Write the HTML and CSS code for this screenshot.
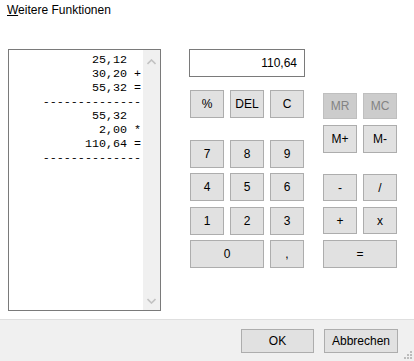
FILE: index.html
```html
<!DOCTYPE html>
<html>
<head>
<meta charset="utf-8">
<link rel="stylesheet" href="styles.css">
</head>
<body>
<div class="dialog">
  <div class="title"><span class="acc">W</span>eitere Funktionen</div>
  <div class="content">
    <div class="tape">
      <pre class="tape-text">25,12  
30,20 +
55,32 =
--------------
55,32  
2,00 *
110,64 =
--------------</pre>
      <div class="scrollbar">
        <svg class="arrow" width="9" height="6" viewBox="0 0 9 6"><path d="M0.5 5 L4.5 1 L8.5 5" fill="none" stroke="#c2c2c2" stroke-width="1.6"/></svg>
        <svg class="arrow" width="9" height="6" viewBox="0 0 9 6"><path d="M0.5 1 L4.5 5 L8.5 1" fill="none" stroke="#c2c2c2" stroke-width="1.6"/></svg>
      </div>
    </div>
    <div class="panel">
      <div class="col-left">
        <div class="display">110,64</div>
        <div class="keys top-keys">
          <button class="key">%</button>
          <button class="key">DEL</button>
          <button class="key">C</button>
        </div>
        <div class="keys num-keys">
          <button class="key">7</button>
          <button class="key">8</button>
          <button class="key">9</button>
          <button class="key">4</button>
          <button class="key">5</button>
          <button class="key">6</button>
          <button class="key">1</button>
          <button class="key">2</button>
          <button class="key">3</button>
          <button class="key wide">0</button>
          <button class="key">,</button>
        </div>
      </div>
      <div class="col-right">
        <div class="keys mem-keys">
          <button class="key disabled">MR</button>
          <button class="key disabled">MC</button>
        </div>
        <div class="keys mem2-keys">
          <button class="key">M+</button>
          <button class="key">M-</button>
        </div>
        <div class="keys op-keys">
          <button class="key">-</button>
          <button class="key">/</button>
          <button class="key">+</button>
          <button class="key">x</button>
          <button class="key wide">=</button>
        </div>
      </div>
    </div>
  </div>
  <div class="footer">
    <button class="dlg-btn ok">OK</button>
    <button class="dlg-btn cancel">Abbrechen</button>
    <svg class="grip" width="9" height="9" viewBox="0 0 9 9">
      <rect x="7" y="1" width="2" height="2" fill="#bcbcbc"/>
      <rect x="4" y="4" width="2" height="2" fill="#bcbcbc"/>
      <rect x="7" y="4" width="2" height="2" fill="#bcbcbc"/>
      <rect x="1" y="7" width="2" height="2" fill="#bcbcbc"/>
      <rect x="4" y="7" width="2" height="2" fill="#bcbcbc"/>
      <rect x="7" y="7" width="2" height="2" fill="#bcbcbc"/>
    </svg>
  </div>
</div>
</body>
</html>
```
FILE: styles.css
```css
html, body {
  margin: 0;
  padding: 0;
  background: #ffffff;
}
.dialog {
  width: 414px;
  height: 361px;
  display: flex;
  flex-direction: column;
  font-family: "Liberation Sans", Arial, sans-serif;
  font-size: 12px;
  color: #000;
  position: relative;
  overflow: hidden;
}
.title {
  height: 49px;
  box-sizing: border-box;
  padding: 2px 0 0 7px;
  line-height: 16px;
}
.acc {
  text-decoration: underline;
}
.content {
  height: 270px;
  display: flex;
  flex-direction: row;
  align-items: flex-start;
}
.tape {
  margin-left: 8px;
  width: 153px;
  height: 262px;
  box-sizing: border-box;
  border: 1px solid #7a7a7a;
  display: flex;
  flex-direction: row;
  background: #fff;
}
.tape-text {
  flex: 1;
  margin: 0;
  padding: 3px 2px 0 0;
  font-family: "Liberation Mono", "Courier New", monospace;
  font-size: 11.7px;
  line-height: 14px;
  text-align: right;
  white-space: pre;
}
.scrollbar {
  width: 17px;
  background: #f0f0f0;
  display: flex;
  flex-direction: column;
  justify-content: space-between;
  align-items: center;
  padding: 9px 0 6px;
  box-sizing: border-box;
}
.arrow {
  display: block;
}
.panel {
  margin-left: 28px;
  display: flex;
  flex-direction: row;
  gap: 18px;
}
.col-left {
  width: 116px;
  display: flex;
  flex-direction: column;
}
.display {
  height: 28px;
  box-sizing: border-box;
  border: 1px solid #7a7a7a;
  text-align: right;
  padding-right: 7px;
  line-height: 26px;
  font-size: 12px;
}
.keys {
  display: grid;
  grid-template-columns: 34px 34px 34px;
  column-gap: 6px;
}
.top-keys {
  margin: 13px 0 0 1px;
  grid-template-rows: 28px;
}
.num-keys {
  margin: 22px 0 0 1px;
  grid-template-rows: 28px 28px 28px 28px;
  row-gap: 5.34px;
}
.col-right {
  display: flex;
  flex-direction: column;
  padding-top: 44px;
}
.col-right .keys {
  grid-template-columns: 34px 34px;
}
.mem-keys {
  grid-template-rows: 26px;
}
.mem2-keys {
  margin-top: 6px;
  grid-template-rows: 28px;
}
.op-keys {
  margin-top: 21px;
  grid-template-rows: 27px 27px 28px;
  row-gap: 6px;
}
.key {
  margin: 0;
  padding: 0;
  box-sizing: border-box;
  border: 1px solid #adadad;
  background: #e1e1e1;
  font-family: "Liberation Sans", Arial, sans-serif;
  font-size: 12px;
  color: #000;
  line-height: 1;
}
.key.wide {
  grid-column: span 2;
}
.key.disabled {
  background: #cccccc;
  border-color: #bfbfbf;
  color: #838383;
}
.footer {
  flex: 1;
  box-sizing: border-box;
  border-top: 1px solid #dfdfdf;
  background: #f0f0f0;
  display: flex;
  flex-direction: row;
  justify-content: flex-end;
  align-items: flex-start;
  gap: 10px;
  padding: 9px 16px 0 0;
  position: relative;
}
.dlg-btn {
  margin: 0;
  padding: 0;
  height: 24px;
  box-sizing: border-box;
  border: 1px solid #adadad;
  background: #e1e1e1;
  font-family: "Liberation Sans", Arial, sans-serif;
  font-size: 12px;
  color: #000;
}
.ok {
  width: 73px;
}
.cancel {
  width: 74px;
}
.grip {
  position: absolute;
  right: 2px;
  bottom: 2px;
}
```
